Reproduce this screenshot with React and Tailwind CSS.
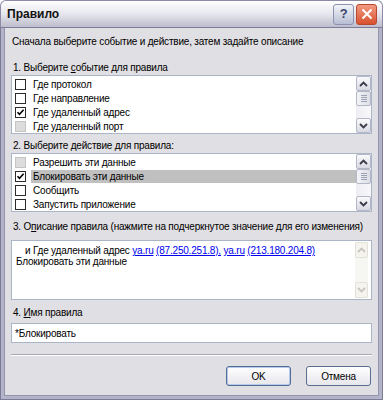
import React from 'react';

const font = { fontFamily: '"Liberation Sans", Arial, sans-serif' };

function CheckBox({ checked, disabled }) {
  if (disabled) {
    return <span className="inline-block w-[11px] h-[11px] border border-[#c4c4c4] bg-[#dcdcdc] shrink-0" />;
  }
  return (
    <span className="inline-flex items-center justify-center w-[11px] h-[11px] border border-[#2c2c2c] bg-white shrink-0">
      {checked && (
        <svg width="9" height="9" viewBox="0 0 9 9">
          <path d="M1.5 4.2 L3.5 6.4 L7.6 1.8" fill="none" stroke="#000" strokeWidth="1.6" />
        </svg>
      )}
    </span>
  );
}

function Arrow({ up, color = '#3a3a4a' }) {
  return (
    <svg width="9" height="6" viewBox="0 0 9 6">
      <path d={up ? 'M1 5 L4.5 1.5 L8 5' : 'M1 1 L4.5 4.5 L8 1'} fill="none" stroke={color} strokeWidth="1.8" />
    </svg>
  );
}

function ScrollBar() {
  return (
    <div className="w-[15px] flex flex-col bg-[#f3f3f8] shrink-0">
      <div className="h-[15px] flex items-center justify-center rounded-[2px] border border-[#b4b7c8] bg-gradient-to-b from-[#fafafc] to-[#d8d9e2]">
        <Arrow up />
      </div>
      <div className="h-[15px] flex flex-col items-center justify-center gap-[1px] rounded-[2px] border border-[#b4b7c8] bg-gradient-to-r from-[#f4f4f8] to-[#dcdde6]">
        <span className="w-[6px] h-px bg-[#9ea0b4]" />
        <span className="w-[6px] h-px bg-[#9ea0b4]" />
        <span className="w-[6px] h-px bg-[#9ea0b4]" />
        <span className="w-[6px] h-px bg-[#9ea0b4]" />
      </div>
      <div className="flex-1 bg-gradient-to-r from-[#ededf3] to-[#f8f8fb]" />
      <div className="h-[15px] flex items-center justify-center rounded-[2px] border border-[#b4b7c8] bg-gradient-to-b from-[#fafafc] to-[#d8d9e2]">
        <Arrow />
      </div>
    </div>
  );
}

function DisabledScrollBar() {
  return (
    <div className="w-[13px] flex flex-col bg-[#f6f6f2] shrink-0 mr-[3px] my-[1px]">
      <div className="h-[16px] flex items-center justify-center rounded-[2px] border border-[#e4e2d8] bg-[#f4f3ee]">
        <Arrow up color="#c8c6bc" />
      </div>
      <div className="flex-1" />
      <div className="h-[16px] flex items-center justify-center rounded-[2px] border border-[#e4e2d8] bg-[#f4f3ee]">
        <Arrow color="#c8c6bc" />
      </div>
    </div>
  );
}

function List({ items }) {
  return (
    <div className="h-[59px] border border-[#aab6c6] bg-white flex">
      <div className="flex-1 pt-[1px] overflow-hidden">
        {items.map((it) => (
          <div key={it.label} className="h-[14px] flex items-center pl-[3px]">
            <CheckBox checked={it.checked} disabled={it.disabled} />
            <span
              className={`ml-[5px] pl-[2px] flex-1 h-[13px] leading-[13px] whitespace-nowrap ${it.selected ? 'bg-[#c0c0c0]' : ''}`}
            >
              {it.label}
            </span>
          </div>
        ))}
      </div>
      <ScrollBar />
    </div>
  );
}

function Button({ children, def }) {
  return (
    <button
      className={`w-[65px] h-[20px] rounded-[3px] border bg-gradient-to-b from-[#ffffff] to-[#e6e6ec] text-[10px] text-black ${
        def ? 'border-[#4e6c98] shadow-[inset_0_0_0_1px_#b8c8e8]' : 'border-[#5a6c90]'
      }`}
    >
      {children}
    </button>
  );
}

export default function App() {
  return (
    <div style={font} className="w-[383px] h-[400px] flex flex-col text-[10px] tracking-[-0.2px] text-black select-none">
      <div className="h-[27px] flex items-center rounded-t-[6px] border border-b-0 border-[#8c8ca6] bg-gradient-to-b from-[#ffffff] via-[#e6e6ee] to-[#bdbdcc] pl-[6px] pr-[5px]">
        <span className="font-bold text-[12px] tracking-normal text-[#111] flex-1">Правило</span>
        <div className="w-[21px] h-[21px] rounded-[3px] border border-[#8c92b0] bg-gradient-to-b from-[#f2f4fa] to-[#b8bed4] flex items-center justify-center text-[#3a4468] text-[13px] font-bold mr-[2px]">
          ?
        </div>
        <div className="w-[21px] h-[21px] rounded-[3px] border border-[#b84830] bg-gradient-to-b from-[#f09a80] to-[#d8502e] flex items-center justify-center">
          <svg width="12" height="12" viewBox="0 0 12 12">
            <path d="M1.5 1.5 L10.5 10.5 M10.5 1.5 L1.5 10.5" stroke="#fff" strokeWidth="2" />
          </svg>
        </div>
      </div>
      <div className="flex-1 flex flex-col border-x-[4px] border-b-[4px] border-[#b4b4c8] outline outline-1 outline-[#7c7c9a] -outline-offset-1 bg-[#e0dfe3] shadow-[inset_0_0_0_1px_#9494ae]">
        <div className="pl-[7px] pr-[7px] flex flex-col whitespace-nowrap">
          <div className="mt-[8px] h-[14px] leading-[14px] pl-[1px]">Сначала выберите событие и действие, затем задайте описание</div>

          <div className="mt-[12px] h-[14px] leading-[14px] pl-[2px]">
            1. Выберите <u>с</u>обытие для правила
          </div>
          <List
            items={[
              { label: 'Где протокол' },
              { label: 'Где направление' },
              { label: 'Где удаленный адрес', checked: true },
              { label: 'Где удаленный порт', disabled: true },
            ]}
          />

          <div className="mt-[5px] h-[14px] leading-[14px] pl-[2px]">
            2. Выберите <u>д</u>ействие для правила:
          </div>
          <List
            items={[
              { label: 'Разрешить эти данные', disabled: true },
              { label: 'Блокировать эти данные', checked: true, selected: true },
              { label: 'Сообщить' },
              { label: 'Запустить приложение' },
            ]}
          />

          <div className="mt-[8px] h-[14px] leading-[14px] pl-[2px]">
            3. О<u>п</u>исание правила (нажмите на подчеркнутое значение для его изменения)
          </div>
          <div className="h-[60px] mt-[6px] border border-[#aab6c6] bg-white flex">
            <div className="flex-1 pl-[4px] pt-[4px] leading-[11px]">
              <div className="pl-[9px]">
                и Где удаленный адрес{' '}
                <span className="text-[#0000ee] underline">ya.ru</span>{' '}
                <span className="text-[#0000ee] underline">(87.250.251.8),</span>{' '}
                <span className="text-[#0000ee] underline">ya.ru</span>{' '}
                <span className="text-[#0000ee] underline">(213.180.204.8)</span>
              </div>
              <div>Блокировать эти данные</div>
            </div>
            <DisabledScrollBar />
          </div>

          <div className="mt-[6px] h-[14px] leading-[14px] pl-[2px]">
            4. <u>И</u>мя правила
          </div>
          <div className="mt-[3px] h-[20px] border border-[#aab6c6] bg-white flex items-center pl-[3px]">
            *Блокировать
          </div>

          <div className="mt-[11px] h-[2px] border-t border-[#a8a8b4] border-b border-b-white" />

          <div className="mt-[10px] flex justify-end gap-[15px] pr-[1px]">
            <Button def>OK</Button>
            <Button>Отмена</Button>
          </div>
        </div>
      </div>
    </div>
  );
}
